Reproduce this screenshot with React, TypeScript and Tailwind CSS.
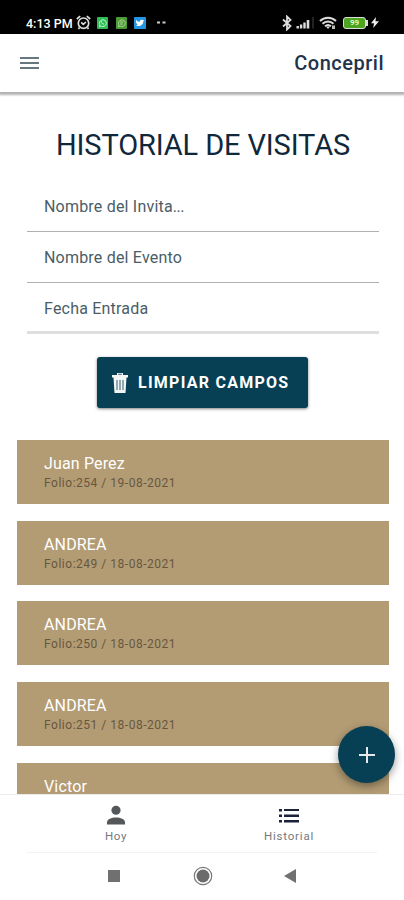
import React from 'react';

const visits = [
  { name: 'Juan Perez', detail: 'Folio:254 / 19-08-2021' },
  { name: 'ANDREA', detail: 'Folio:249 / 18-08-2021' },
  { name: 'ANDREA', detail: 'Folio:250 / 18-08-2021' },
  { name: 'ANDREA', detail: 'Folio:251 / 18-08-2021' },
  { name: 'Victor', detail: '' },
];

function StatusBar() {
  return (
    <div className="flex h-[34px] shrink-0 items-end justify-between bg-black pr-[25px] pb-[4px] pl-[26px] text-white">
      <div className="flex h-[15px] items-center">
        <span className="w-[47px] pt-[2px] text-[12.5px] leading-[15px] font-medium whitespace-nowrap">4:13 PM</span>
        <svg className="ml-[3px]" width="15" height="15" viewBox="0 0 15 15" fill="none" stroke="#ddd" strokeWidth="1.7">
          <circle cx="7.5" cy="8.2" r="5.2" />
          <path d="M.8 4l3.4-2.800M14.200 4l-3.400-2.800M5.2 7.4l2.1 2 2.6-2.4M3.5 12.5l-1 1.5M11.5 12.5l1 1.5" />
        </svg>
        <svg className="ml-[6px]" width="11" height="12" viewBox="0 0 11 12">
          <rect width="11" height="12" rx="1" fill="#2fbe55" />
          <path d="M2.4 9.6l.5-1.8a3.4 3.4 0 1 1 1.4 1.4zM4.2 4.2c.1 1.8 1.3 2.8 2.8 3" fill="none" stroke="#c9f3d2" strokeWidth="1" />
        </svg>
        <svg className="ml-[8px]" width="11" height="12" viewBox="0 0 11 12">
          <rect width="11" height="12" rx="1" fill="#4c9a35" />
          <path d="M2.4 9.6l.5-1.8a3.4 3.4 0 1 1 1.4 1.4zM4 5h3.2M4 7h3" fill="none" stroke="#a9d795" strokeWidth="1" />
        </svg>
        <svg className="ml-[7px]" width="12" height="12" viewBox="0 0 12 12">
          <rect width="12" height="12" rx="1" fill="#2495e2" />
          <path d="M2 3c1.2 1.3 2.4 1.8 3.8 1.8 0-1.7 1.7-2.7 3-1.6l1.4-.3-.9 1.3c0 3.6-3.7 6-7.5 4.3 1 0 1.7-.2 2.2-.7C2.700 7.400 1.600 5.300 2 3z" fill="#fff" />
        </svg>
        <svg className="ml-[11px]" width="9" height="3" viewBox="0 0 9 3" fill="#ccc">
          <rect y="0.500" width="3" height="2" />
          <rect x="5.500" y="0.500" width="3" height="2" />
        </svg>
      </div>
      <div className="flex h-[15px] items-center">
        <svg width="10" height="16" viewBox="0 0 10 16" fill="none" stroke="#ddd" strokeWidth="1.8">
          <path d="M1 4.500l7.500 6.500L5 14.500v-13L8.500 5 1 11.500" />
        </svg>
        <svg className="ml-[4px]" width="19" height="12" viewBox="0 0 19 12" fill="#ddd">
          <rect x="0.500" y="9" width="2.400" height="2.500" />
          <rect x="3.900" y="7.500" width="2.400" height="4" />
          <rect x="7.300" y="5.500" width="2.400" height="6" />
          <rect x="10.700" y="3" width="2.600" height="8.500" />
          <rect x="16.500" y="0" width="1" height="11.500" fill="#444" />
        </svg>
        <svg className="ml-[4px]" width="18" height="14" viewBox="0 0 18 14" fill="none" stroke="#ddd" strokeWidth="2">
          <path d="M1 5c4.500-4.500 11.500-4.500 16 0M3.500 7.800c3.200-3 7.800-3 11 0M6 10.300c2-1.700 4-1.700 6 0" />
          <path d="M7 10.500l2 2.500 2-2.500z" fill="#ddd" stroke="none" />
          <rect x="13" y="9.500" width="3" height="3.500" fill="#bbb" stroke="none" />
        </svg>
        <div className="ml-[6px] flex h-[12px] w-[23px] items-center justify-center rounded-[3px] border-[1.5px] border-[#ddd] bg-[#4da51f] text-[8px] leading-none font-bold text-[#dff5c8]">99</div>
        <div className="h-[6px] w-[2px] bg-[#ddd]" />
        <svg className="ml-[3px]" width="8" height="11" viewBox="0 0 8 11" fill="#eee">
          <path d="M5 0L0 6.200h3L2.200 11 8 4.300H4.500z" />
        </svg>
      </div>
    </div>
  );
}

function Header() {
  return (
    <header className="z-10 flex h-[58px] shrink-0 items-center justify-between bg-white pr-[20px] pl-[20px] shadow-[0_2px_2px_1px_rgba(0,0,0,0.3)]">
      <div className="flex flex-col gap-[3px]">
        <div className="h-[2px] w-[19px] bg-[#66777e]" />
        <div className="h-[2px] w-[19px] bg-[#66777e]" />
        <div className="h-[2px] w-[19px] bg-[#66777e]" />
      </div>
      <div className="text-[20px] leading-6 font-medium tracking-[0.5px] text-[#22334a]">Concepril</div>
    </header>
  );
}

export default function App() {
  return (
    <div className="flex h-[900px] w-[404px] flex-col overflow-hidden bg-white font-[Roboto,sans-serif]">
      <StatusBar />
      <Header />
      <main className="relative h-[702px] shrink-0 overflow-hidden">
        <h1 className="mt-[35px] pl-[2px] text-center text-[29px] leading-9 font-normal tracking-[-0.12px] whitespace-nowrap text-[#10283b]">HISTORIAL DE VISITAS</h1>
        <div className="mx-[27px] mt-[18px] w-[352px] text-[16px] tracking-[0.200px] text-[#4a5d67]">
          <div className="flex h-[51px] items-center border-b border-[#aeb1b3] pt-[2px] pl-[17px]">
            Nombre del Invita<span className="tracking-[-0.500px]">...</span>
          </div>
          <div className="flex h-[51px] items-center border-b border-[#aeb1b3] pt-[2px] pl-[17px]">Nombre del Evento</div>
          <div className="flex h-[51px] items-center border-b-[3px] border-[#dedfe0] pt-[4px] pl-[17px]">Fecha Entrada</div>
        </div>
        <button className="mt-[23px] ml-[97px] flex h-[51px] w-[211px] items-center rounded-[3px] bg-[#073f55] pl-[14px] text-[16px] font-bold tracking-[1.250px] whitespace-nowrap text-white shadow-[0_1px_3px_rgba(0,0,0,0.5)]">
          <svg className="mr-[9px] shrink-0" width="18" height="22" viewBox="0 0 18 22">
            <path d="M6 3V1h6v2h5v2.500h-1.500L14.500 21h-11L2.500 5.500H1V3z" fill="#f2f5f6" />
            <path d="M7.300 2.300h3.400M6 8v10M9 8v10M12 8v10" stroke="#557682" strokeWidth="1.200" />
          </svg>
          LIMPIAR CAMPOS
        </button>
        <div className="mx-[17px] mt-[32px] flex w-[372px] flex-col gap-[16.700px]">
          {visits.map((v, i) => (
            <div key={i} className="h-[64px] shrink-0 bg-[#b39c74] pt-[14px] pl-[27px]">
              <div className="text-[16px] leading-5 tracking-[0.150px] whitespace-nowrap text-white">{v.name}</div>
              {v.detail && (
                <div className="text-[12px] leading-[19px] tracking-[0.520px] whitespace-nowrap text-[#66573f]">{v.detail}</div>
              )}
            </div>
          ))}
        </div>
        <button className="absolute top-[634px] left-[338px] flex size-[57px] items-center justify-center rounded-full bg-[#073f55] shadow-[0_3px_8px_rgba(0,0,0,0.4)]">
          <svg width="16" height="16" viewBox="0 0 16 16" stroke="#e4eaec" strokeWidth="2">
            <path d="M8 0v16M0 8h16" />
          </svg>
        </button>
      </main>
      <nav className="flex h-[58px] shrink-0 border-t border-[#ececec] text-[11.500px] text-[#75797d]">
        <div className="flex w-[232px] flex-col items-center pt-[10px]">
          <svg width="20" height="20" viewBox="0 0 20 21" fill="#55585b">
            <circle cx="10" cy="5.500" r="4.800" />
            <path d="M.5 20.500v-2c0-3 3-5.500 9.500-5.500s9.500 2.500 9.500 5.500v2z" />
          </svg>
          <span className="mt-[4px] leading-[14px] tracking-[0.700px]">Hoy</span>
        </div>
        <div className="flex w-[114px] flex-col items-center pt-[14px]">
          <svg width="20" height="14" viewBox="0 0 20 14" fill="#1d2238">
            <path d="M0 0h3v2.500H0zM5 0h15v2H5zM0 5.500h3V8H0zM5 5.500h15V8H5zM0 11h3v2.500H0zM5 11h15v2.500H5z" />
          </svg>
          <span className="mt-[6px] leading-[14px] tracking-[0.800px]">Historial</span>
        </div>
      </nav>
      <div className="flex h-[48px] shrink-0 items-start px-[27px]">
        <div className="flex h-[47px] w-[353px] items-center border-t border-[#f3f3f3] pl-[81px]">
          <div className="size-[12px] bg-[#707070]" />
          <svg className="ml-[73px]" width="20" height="20" viewBox="0 0 20 20" fill="none">
            <circle cx="10" cy="10" r="8.700" stroke="#777" strokeWidth="1.200" />
            <circle cx="10" cy="10" r="6.500" fill="#6b6b6b" />
          </svg>
          <svg className="ml-[71px]" width="12" height="14" viewBox="0 0 12 14">
            <path d="M0 7L12 0v14z" fill="#707070" />
          </svg>
        </div>
      </div>
    </div>
  );
}
